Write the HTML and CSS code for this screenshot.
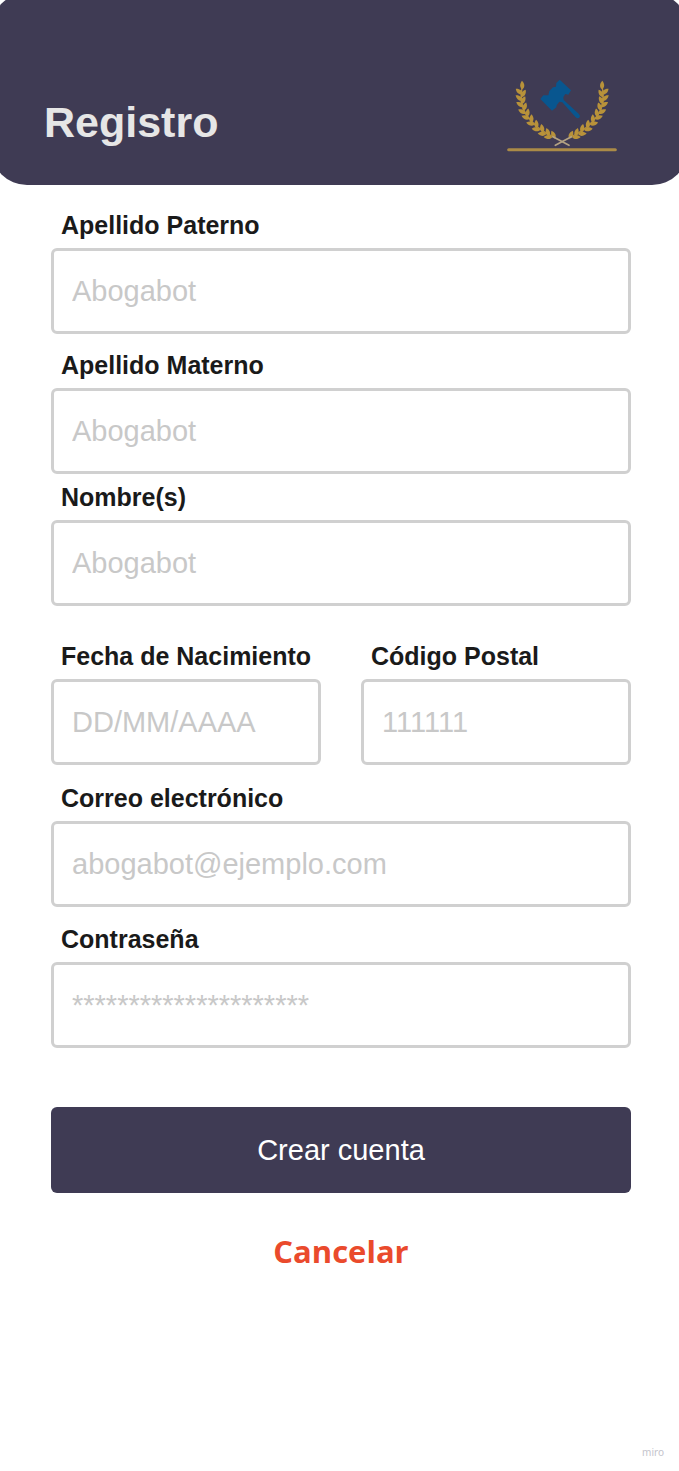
FILE: index.html
```html
<!DOCTYPE html>
<html lang="es">
<head>
<meta charset="utf-8">
<meta name="viewport" content="width=device-width, initial-scale=1">
<title>Registro</title>
<link rel="stylesheet" href="styles.css">
</head>
<body>
<div class="page">
  <header class="header">
    <h1 class="title">Registro</h1>
    <svg class="logo" viewBox="36 42 330 222" aria-hidden="true">
      <defs>
        <path id="leaf" d="M0 3C-8 -2 -9 -13 -1 -23C8 -14 8 -3 0 3Z"/>
        <g id="branch">
          <path class="stem" d="M82 60C76 100 78 126 96 152S140 199 176 216"/>
          <g class="leaves">
            <use href="#leaf" transform="translate(82 70)"/>
            <use href="#leaf" transform="translate(80 86) rotate(-48)"/>
            <use href="#leaf" transform="translate(80 94) rotate(34)"/>
            <use href="#leaf" transform="translate(80 105) rotate(-50)"/>
            <use href="#leaf" transform="translate(80 114) rotate(30)"/>
            <use href="#leaf" transform="translate(83 124) rotate(-54)"/>
            <use href="#leaf" transform="translate(86 134) rotate(22)"/>
            <use href="#leaf" transform="translate(90 144) rotate(-60)"/>
            <use href="#leaf" transform="translate(96 153) rotate(12)"/>
            <use href="#leaf" transform="translate(101 161) rotate(-66)"/>
            <use href="#leaf" transform="translate(109 171) rotate(4)"/>
            <use href="#leaf" transform="translate(116 178) rotate(-74)"/>
            <use href="#leaf" transform="translate(125 187) rotate(-2)"/>
            <use href="#leaf" transform="translate(133 194) rotate(-80)"/>
            <use href="#leaf" transform="translate(143 200) rotate(-8)"/>
            <use href="#leaf" transform="translate(151 207) rotate(-84)"/>
            <use href="#leaf" transform="translate(161 211) rotate(-14)"/>
            <use href="#leaf" transform="translate(169 216) rotate(-88)"/>
            <use href="#leaf" transform="translate(179 218) rotate(-22)"/>
          </g>
          <path class="twig" d="M174 215L222 241"/>
        </g>
      </defs>
      <use href="#branch"/>
      <use href="#branch" transform="translate(403 0) scale(-1 1)"/>
      <path class="gavel" d="M194 44L228 76L220 89L211 87L205 96L206 105L251 146Q257 152 254 157Q249 163 242 157L202 112L193 110L185 121L184 127L171 137L136 102L145 91L160 91L163 78L174 67L183 65L184 54Z"/>
      <path class="base" d="M41 254H361"/>
    </svg>
  </header>

  <main class="main">
    <form class="form">
      <div class="field">
        <label for="paterno">Apellido Paterno</label>
        <input id="paterno" type="text" placeholder="Abogabot">
      </div>
      <div class="field">
        <label for="materno">Apellido Materno</label>
        <input id="materno" type="text" placeholder="Abogabot">
      </div>
      <div class="field field-close">
        <label for="nombre">Nombre(s)</label>
        <input id="nombre" type="text" placeholder="Abogabot">
      </div>
      <div class="row">
        <div class="field">
          <label for="fecha">Fecha de Nacimiento</label>
          <input id="fecha" type="text" placeholder="DD/MM/AAAA">
        </div>
        <div class="field">
          <label for="postal">Código Postal</label>
          <input id="postal" type="text" placeholder="111111">
        </div>
      </div>
      <div class="account">
        <div class="field">
          <label for="correo">Correo electrónico</label>
          <input id="correo" type="email" placeholder="abogabot@ejemplo.com">
        </div>
        <div class="field">
          <label for="clave">Contraseña</label>
          <input id="clave" type="password" placeholder="*********************">
        </div>
      </div>
      <button class="submit" type="submit">Crear cuenta</button>
    </form>
    <a class="cancel" href="#">Cancelar</a>
  </main>

  <footer class="footer">miro</footer>
</div>
</body>
</html>
```

FILE: styles.css
```css
* {
  box-sizing: border-box;
}

body {
  margin: 0;
  background: #fff;
  font-family: "Liberation Sans", Arial, sans-serif;
}

.page {
  display: flex;
  flex-direction: column;
  min-height: 100vh;
  overflow: hidden;
}

.header {
  display: flex;
  justify-content: space-between;
  align-items: flex-end;
  margin: -7px -9px 0;
  padding: 86px 71px 32px 53px;
  border-radius: 36px;
  background: #3f3b54;
}

.title {
  margin: 0 0 6px;
  font-size: 43px;
  line-height: 50px;
  color: #e6e6e6;
}

.logo {
  width: 110px;
  height: 74px;
}

.stem {
  fill: none;
  stroke: #b48f3c;
  stroke-width: 4;
}

.leaves {
  fill: #b8923a;
}

.twig {
  stroke: #b3a283;
  stroke-width: 5;
  stroke-linecap: round;
}

.gavel {
  fill: #08568f;
}

.base {
  stroke: #ab8b47;
  stroke-width: 9;
  stroke-linecap: round;
}

.main {
  display: flex;
  flex-direction: column;
  padding: 26px 48px 32px 51px;
}

.form {
  display: flex;
  flex-direction: column;
  gap: 17px;
}

.field {
  display: flex;
  flex-direction: column;
  gap: 9px;
  min-width: 0;
}

.field-close {
  margin-top: -8px;
}

.field label {
  padding-left: 10px;
  font-size: 25px;
  font-weight: 700;
  line-height: 28px;
  color: #1a1a1a;
}

.field input {
  width: 100%;
  height: 86px;
  padding: 0 18px;
  border: 3px solid #d0d0d0;
  border-radius: 6px;
  background: #fff;
  font: inherit;
  font-size: 29px;
  color: #1a1a1a;
}

.field input::placeholder {
  color: #c8c8c8;
  opacity: 1;
}

.row {
  display: grid;
  grid-template-columns: 1fr 1fr;
  gap: 40px;
  margin-top: 19px;
}

.account {
  display: flex;
  flex-direction: column;
  gap: 18px;
  margin-top: 2px;
}

.submit {
  height: 86px;
  margin-top: 42px;
  border: 0;
  border-radius: 6px;
  background: #3f3b54;
  font: inherit;
  font-size: 29px;
  color: #fff;
}

.cancel {
  align-self: center;
  margin-top: 36px;
  font-family: "Open Sans", "Noto Sans", sans-serif;
  font-size: 31px;
  font-weight: 700;
  line-height: 44px;
  color: #ea4a2c;
  text-decoration: none;
}

.footer {
  margin-top: auto;
  padding: 0 15px 12px;
  font-family: "Noto Sans", sans-serif;
  font-size: 10px;
  line-height: 14px;
  text-align: right;
  color: #c4c4cc;
}
```
